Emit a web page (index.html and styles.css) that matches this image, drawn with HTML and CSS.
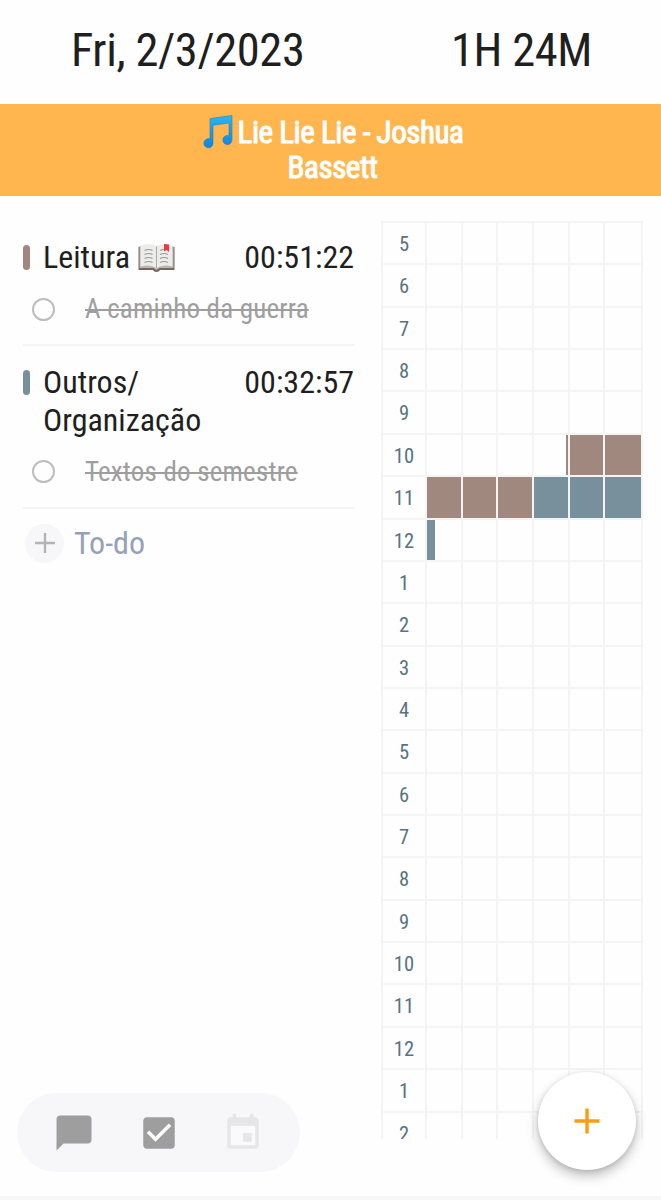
FILE: index.html
```
<!DOCTYPE html>
<html lang="pt">
<head>
    <meta charset="UTF-8">
    <meta name="viewport" content="width=device-width, initial-scale=1.0">
    <title>Planner</title>
    <link rel="stylesheet" href="styles.css">
</head>
<body>
<div class="page">
    <header class="header">
        <span class="header-date">Fri, 2/3/2023</span>
        <span class="header-total">1H 24M</span>
    </header>

    <div class="banner">
        <p class="song">
            <svg class="note" width="32" height="36" viewBox="0 0 32 36">
                <defs>
                    <linearGradient id="blue" x1="0" y1="0" x2="0" y2="1">
                        <stop offset="0" stop-color="#29b6f6"/>
                        <stop offset="1" stop-color="#0c86e0"/>
                    </linearGradient>
                </defs>
                <path fill="url(#blue)" stroke="#2b7fae" stroke-width=".6" d="M8 4.500L30 1.500V26a4.600 4.600 0 1 1-3-4.300V9L11 11.200V29.200a4.600 4.600 0 1 1-3-4.300z"/>
            </svg>Lie Lie Lie - Joshua<br>Bassett
        </p>
    </div>

    <main class="content">
        <section class="tasks">
            <div class="task">
                <div class="task-head">
                    <span class="mark brown"></span>
                    <span class="task-name">Leitura
                        <svg class="book" width="37" height="30" viewBox="0 0 37 30">
                            <path fill="#75675f" d="M.5 4H36.500V27H22c-1 2.500-6 2.500-7 0H.5z"/>
                            <path fill="#b9b5b2" d="M1.500 3H35.500V25H21.500l-3 2-3-2H1.500z"/>
                            <path fill="#ececea" d="M2.500 3C7 .5 14 .3 18.500 3.500 23 .3 30 .5 34.500 3V23.500C29 22 23 22 18.500 25.500 14 22 8 22 2.500 23.500z"/>
                            <path fill="none" stroke="#aaa" d="M18.500 3.500V25"/>
                            <path fill="none" stroke="#999" stroke-width="1.200" d="M6.500 7.500q4-2 8 0M6.500 11.500q4-2 8 0M6.500 15.500q4-2 8 0M6.500 19.500q4-2 8 0M22 7.500q2-1 4-1M22 11.500q4-2 8 0M22 15.500q4-2 8 0M22 19.500q4-2 8 0"/>
                            <path fill="#f0373c" d="M26 1L31 1.500V9l-2.500-2L26 8.500z"/>
                        </svg>
                    </span>
                    <span class="task-time">00:51:22</span>
                </div>
                <div class="todo">
                    <span class="circle"></span>
                    <span class="todo-text">A caminho da guerra</span>
                </div>
            </div>
            <div class="task">
                <div class="task-head">
                    <span class="mark blue"></span>
                    <span class="task-name">Outros/<br>Organização</span>
                    <span class="task-time">00:32:57</span>
                </div>
                <div class="todo">
                    <span class="circle"></span>
                    <span class="todo-text">Textos do semestre</span>
                </div>
            </div>
            <div class="add-todo">
                <span class="add-icon">
                    <svg width="22" height="22" viewBox="0 0 22 22"><path stroke="#b4b4b4" stroke-width="2.400" d="M11 1V21M1 11H21"/></svg>
                </span>
                <span class="add-text">To-do</span>
            </div>
        </section>

        <section class="hours" id="hours"></section>
    </main>

    <nav class="toolbar">
        <svg width="42" height="42" viewBox="0 0 24 24" fill="#9e9e9e"><path d="M20 2H4c-1.100 0-1.990.9-1.990 2L2 22l4-4h14c1.100 0 2-.9 2-2V4c0-1.100-.9-2-2-2z"/></svg>
        <svg width="42" height="42" viewBox="0 0 24 24" fill="#9e9e9e"><path fill="#fff" d="M5 6h14v12H5z"/><path d="M19 3H5c-1.110 0-2 .9-2 2v14c0 1.100.89 2 2 2h14c1.110 0 2-.9 2-2V5c0-1.100-.89-2-2-2zm-9 14l-5-5 1.410-1.410L10 14.170l7.590-7.590L19 8l-9 9z"/></svg>
        <svg width="42" height="42" viewBox="0 0 24 24" fill="#e6e6e8">
            <rect x="6" y="1" width="2" height="3"/>
            <rect x="16" y="1" width="2" height="3"/>
            <rect x="3" y="3" width="18" height="18" rx="2"/>
            <rect x="5" y="8" width="14" height="11" fill="#fafafb"/>
            <rect x="12" y="12" width="5" height="5"/>
        </svg>
    </nav>

    <button class="fab" aria-label="Add">
        <svg width="26" height="26" viewBox="0 0 26 26"><path stroke="#fb9d14" stroke-width="3.400" d="M13 .5V25.500M.5 13H25.500"/></svg>
    </button>
</div>

<script>
    var hours = [5, 6, 7, 8, 9, 10, 11, 12, 1, 2, 3, 4, 5, 6, 7, 8, 9, 10, 11, 12, 1, 2];

    // row index -> list of [start minute, end minute, colour]
    var blocks = {
        5: [[39.1, 60, 'brown']],
        6: [[0, 29.6, 'brown'], [29.6, 60, 'blue']],
        7: [[0, 2.2, 'blue']]
    };

    var html = '';
    hours.forEach(function(hour, i) {
        var fills = (blocks[i] || []).map(function(b) {
            return '<span class="fill ' + b[2] + '" style="left:' + (b[0] / 0.6) + '%;width:' + ((b[1] - b[0]) / 0.6) + '%"></span>';
        }).join('');
        html += '<div class="hour-row"><span class="hour">' + hour + '</span>' +
            '<div class="slots">' + fills + '<i></i><i></i><i></i><i></i><i></i><i></i></div></div>';
    });
    document.getElementById('hours').innerHTML = html;
</script>
</body>
</html>
```
FILE: styles.css
```
* {
    box-sizing: border-box;
}
body {
    margin: 0;
    font-family: "Roboto Condensed", Roboto, sans-serif;
    font-stretch: 75%;
    color: #1f1f1f;
    background-color: #fefefe;
}
.page {
    position: relative;
    height: 1200px;
    overflow: hidden;
    border-bottom: 4px solid #f7f7f7;
}
.header {
    display: flex;
    justify-content: space-between;
    align-items: center;
    height: 104px;
    padding: 0 69px 4px 71px;
    font-size: 46.5px;
    letter-spacing: -.4px;
}
.banner {
    display: flex;
    justify-content: center;
    height: 92px;
    padding: 10px 0 0 4px;
    background-color: #ffb64f;
}
.song {
    margin: 0;
    color: #fff;
    font-size: 31px;
    line-height: 35px;
    letter-spacing: -.45px;
    text-align: center;
    -webkit-text-stroke: 1.1px #fff;
}
.note {
    margin-right: 4px;
    vertical-align: -7px;
}
.content {
    display: flex;
    justify-content: space-between;
    padding: 25px 18px 0 23px;
}
.tasks {
    width: 332px;
    padding-top: 17px;
}
.task {
    margin-bottom: 16.5px;
    border-bottom: 2px solid #f4f4f4;
}
.task-head {
    display: flex;
    font-size: 32px;
    line-height: 38px;
}
.mark {
    width: 7px;
    height: 25px;
    margin: 7px 13px 0 0;
    border-radius: 3.5px;
}
.brown {
    background-color: #a1887f;
}
.blue {
    background-color: #78909c;
}
.task-name {
    flex: 1;
}
.task-time {
    margin-right: 1px;
}
.book {
    margin-left: 1px;
    vertical-align: -5px;
}
.todo {
    display: flex;
    align-items: center;
    height: 68px;
    padding: 0 0 2px 9px;
}
.circle {
    width: 23px;
    height: 23px;
    margin-right: 30px;
    border: 2px solid #bdbdbd;
    border-radius: 50%;
}
.todo-text {
    font-size: 27px;
    letter-spacing: .2px;
    color: #9e9e9e;
    text-decoration: line-through;
    text-decoration-thickness: 2px;
}
.add-todo {
    display: flex;
    align-items: center;
    margin-top: -1.5px;
    padding-left: 2px;
}
.add-icon {
    display: flex;
    align-items: center;
    justify-content: center;
    width: 39px;
    height: 39px;
    margin-right: 10px;
    border-radius: 50%;
    background-color: #f7f7f9;
}
.add-text {
    font-size: 32px;
    color: #93a1b9;
}
.hours {
    width: 262px;
    height: 918px;
    overflow: hidden;
    border: 2px solid #f4f4f4;
    border-bottom: none;
}
.hour-row {
    display: flex;
    height: 42.37px;
    border-bottom: 2px solid #f4f4f4;
}
.hour {
    width: 44px;
    border-right: 2px solid #f4f4f4;
    color: #587282;
    font-size: 20.5px;
    line-height: 42px;
    text-align: center;
}
.slots {
    position: relative;
    display: flex;
    flex: 1;
}
.slots i {
    position: relative;
    width: 35.7px;
    border-right: 2px solid #f4f4f4;
}
.slots i:last-child {
    flex: 1;
    border-right: none;
}
.fill {
    position: absolute;
    top: 0;
    bottom: 0;
}
.toolbar {
    position: absolute;
    left: 17px;
    top: 1093px;
    display: flex;
    align-items: center;
    justify-content: space-between;
    width: 283px;
    height: 79px;
    padding: 0 36px;
    border-radius: 40px;
    background-color: #f7f7fa;
}
.fab {
    position: absolute;
    left: 538px;
    top: 1072px;
    display: flex;
    align-items: center;
    justify-content: center;
    width: 98px;
    height: 98px;
    border: none;
    border-radius: 50%;
    background-color: #fff;
    box-shadow: 0 6px 12px rgba(0, 0, 0, .25), 0 1px 4px rgba(0, 0, 0, .12);
}
```
